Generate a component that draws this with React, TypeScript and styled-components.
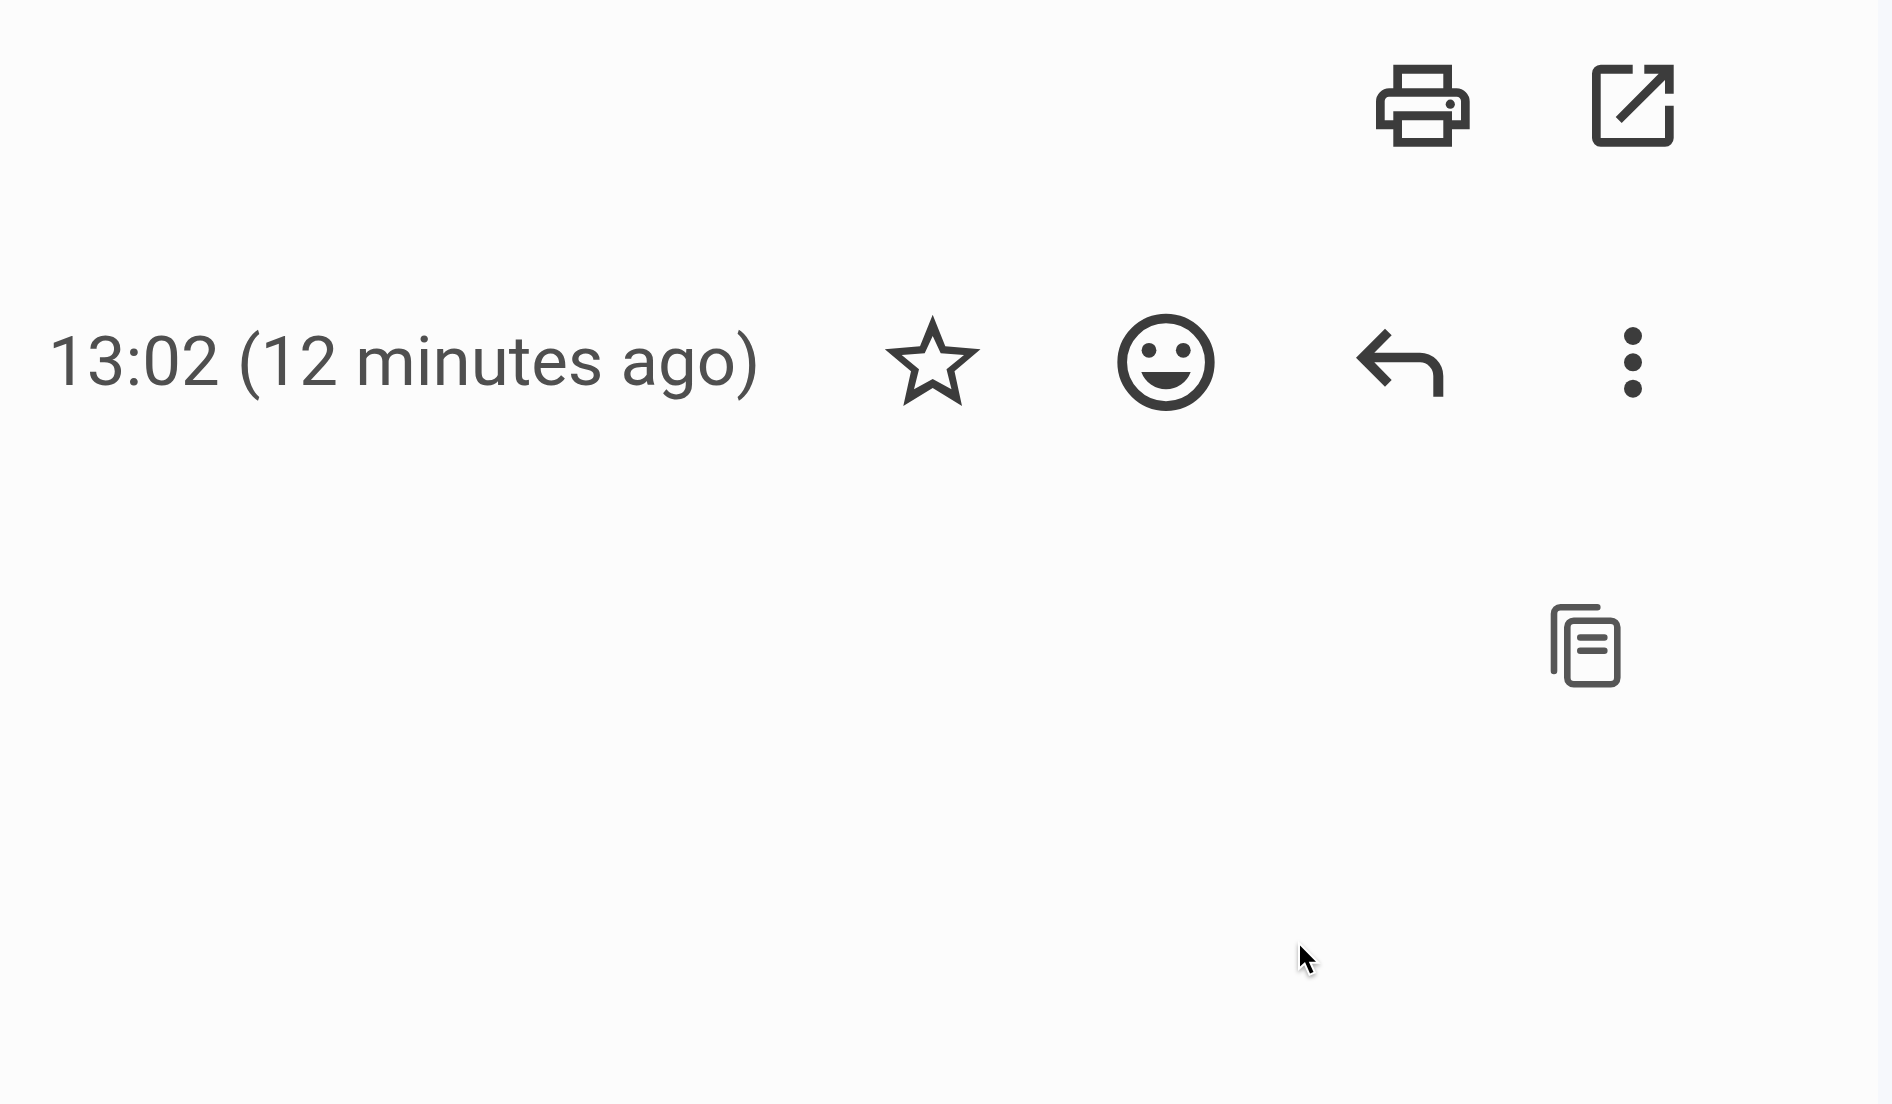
import React from "react";
import styled, { createGlobalStyle } from "styled-components";

const GlobalStyle = createGlobalStyle`
  *, *::before, *::after { box-sizing: border-box; }
  body {
    margin: 0;
    background: #f6f8fc;
    font-family: Roboto, "Liberation Sans", sans-serif;
  }
`;

const Page = styled.div`
  min-height: 100vh;
  display: flex;
  padding-right: 14px;
  overflow: hidden;
`;

const Message = styled.main`
  flex: 1;
  min-width: 0;
  padding: 56px 195px 56px 48px;
  background: #fcfcfc;
`;

const Toolbar = styled.div<{ $gap: number }>`
  display: flex;
  align-items: center;
  justify-content: flex-end;
  gap: ${(p) => p.$gap}px;
`;

const Header = styled.header`
  display: flex;
  align-items: center;
  justify-content: space-between;
  margin-top: 156px;
`;

const Time = styled.time`
  color: #4f4f4f;
  font-size: 69px;
  line-height: 100px;
  white-space: nowrap;
`;

const Body = styled.section`
  display: flex;
  justify-content: flex-end;
  margin-top: 184px;
  padding-right: 47px;
`;

const IconButton = styled.button<{ $soft?: boolean }>`
  flex: none;
  width: 100px;
  height: 100px;
  padding: 0;
  border: 0;
  background: none;
  color: ${(p) => (p.$soft ? "#565656" : "#3c3c3c")};
  cursor: pointer;
`;

const Glyph = styled.svg`
  display: block;
  width: 100%;
  height: 100%;
  overflow: visible;
  fill: currentColor;
`;

const Pointer = styled.svg`
  position: absolute;
  left: 1290px;
  top: 935px;
  width: 40px;
  height: 50px;
  pointer-events: none;
  filter: drop-shadow(0 2px 2px rgba(0, 0, 0, 0.35));
`;

export default function App() {
  return (
    <Page>
      <GlobalStyle />
      <Message>
        <Toolbar $gap={110}>
          <IconButton type="button" aria-label="Print all">
            <Glyph viewBox="0 0 100 100">
              <path
                fillRule="evenodd"
                d="M20.3 32.3V8.7H79V32.3H83.5A13.2 13.2 0 0 1 96.7 45.5V73.3H79V90.7H20.3V73.3H3V45.5A13.2 13.2 0 0 1 16.2 32.3ZM29 17.7V32.3H70.3V17.7ZM20.3 64.3V55.3H79V64.3H88V45A4.3 4.3 0 0 0 83.7 40.7H16A4.3 4.3 0 0 0 11.7 45V64.3ZM29 64.3V82H70.3V64.3Z"
              />
              <circle cx="77.3" cy="48.2" r="4.6" />
            </Glyph>
          </IconButton>
          <IconButton type="button" aria-label="In new window">
            <Glyph viewBox="0 0 100 100">
              <path d="M49.7 8.7H17.7A8.7 8.7 0 0 0 9 17.4V82A8.7 8.7 0 0 0 17.7 90.7H82A8.7 8.7 0 0 0 90.7 82V49.7H82V82H17.7V17.7H49.7Z" />
              <path d="M61.3 8.7H90.7V37.7H82V24L38.7 67L32.7 61L75.7 17.7H61.3Z" />
            </Glyph>
          </IconButton>
        </Toolbar>

        <Header>
          <Time>13:02 (12 minutes ago)</Time>
          <Toolbar $gap={133}>
            <IconButton type="button" aria-label="Not starred">
              <Glyph viewBox="1 0 100 100">
                <path
                  fillRule="evenodd"
                  d="M49.7 2.7L62.3 34.2L97.5 37.3L71.5 59.3L79 94L49.7 76L20.3 94L28 59.3L1.8 37.3L37 34.2ZM49.7 24L41.7 41.3L18.7 43L36 57.3L31 77.3L49.7 67L68.5 77.3L63.5 57.3L81 43L57.7 41.3Z"
                />
              </Glyph>
            </IconButton>
            <IconButton type="button" aria-label="Add reaction">
              <Glyph viewBox="1 0 100 100">
                <circle
                  cx="50"
                  cy="50.3"
                  r="43.8"
                  fill="none"
                  stroke="currentColor"
                  strokeWidth="9.7"
                />
                <circle cx="33" cy="38.3" r="7.4" />
                <circle cx="67.3" cy="38.3" r="7.4" />
                <path d="M25.3 60H74.7A26.3 26.3 0 0 1 25.3 60Z" />
              </Glyph>
            </IconButton>
            <IconButton type="button" aria-label="Reply">
              <Glyph viewBox="0 0 100 100">
                <path d="M6 45.7L35 16.7L41.7 23.3L24.3 40.7H70A23.3 23.3 0 0 1 93.3 64V84.7H83.3V64A13.5 13.5 0 0 0 70 50.3H24.3L41.7 68L35 74.7Z" />
              </Glyph>
            </IconButton>
            <IconButton type="button" aria-label="More">
              <Glyph viewBox="0 0 100 100">
                <circle cx="50" cy="24" r="9" />
                <circle cx="50" cy="50.3" r="9" />
                <circle cx="50" cy="76.7" r="9" />
              </Glyph>
            </IconButton>
          </Toolbar>
        </Header>

        <Body>
          <IconButton type="button" aria-label="Copy" $soft>
            <Glyph viewBox="0 0 100 100">
              <g
                fill="none"
                stroke="currentColor"
                strokeWidth="6.6"
                strokeLinecap="round"
              >
                <path d="M61.3 11.3H24.5A6.5 6.5 0 0 0 18 17.8V75" />
                <rect x="31.3" y="24.7" width="50" height="63.6" rx="6.5" />
                <path d="M44.3 41.5H68.3M44.3 54.8H68.3" />
              </g>
            </Glyph>
          </IconButton>
        </Body>
      </Message>
      <Pointer viewBox="0 0 40 50" aria-hidden="true">
        <path
          d="M10 10.5V31.5L15 27L20 38.5L23.5 37L18.8 26.7H26Z"
          fill="#000"
          stroke="#fff"
          strokeWidth="4"
          paintOrder="stroke"
        />
      </Pointer>
    </Page>
  );
}
